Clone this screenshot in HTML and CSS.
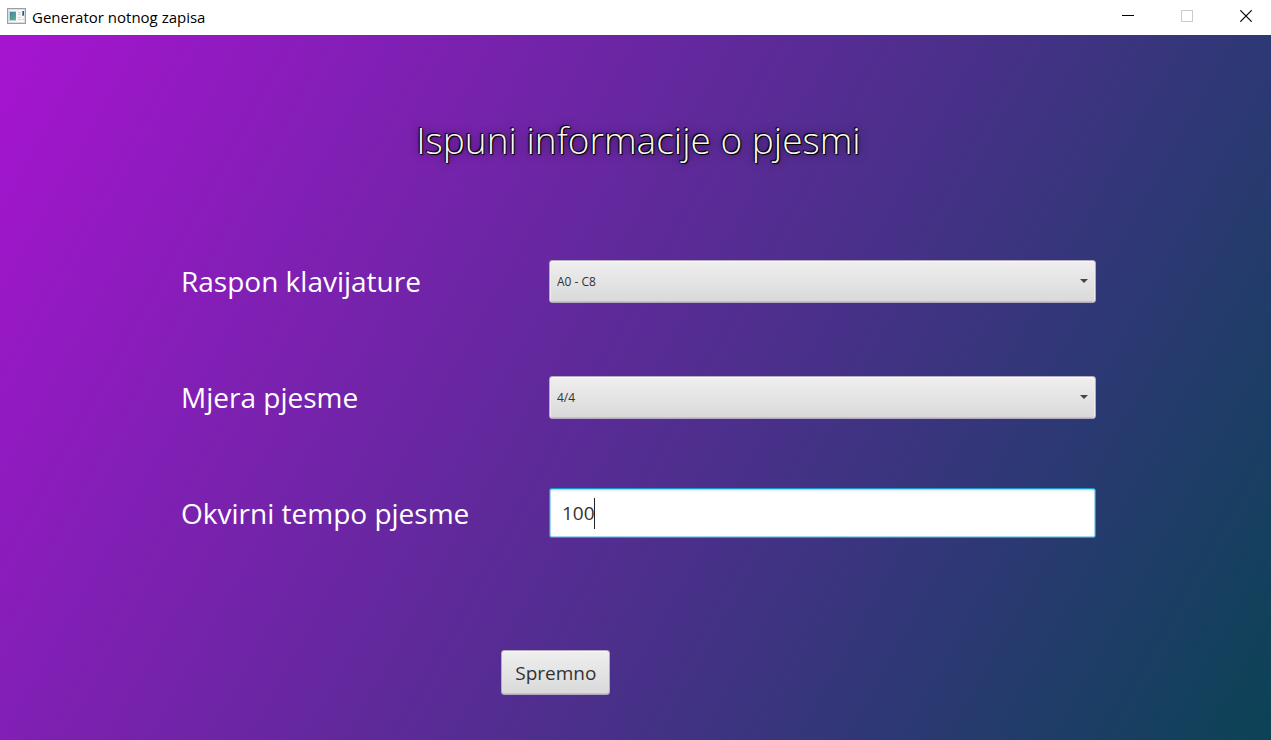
FILE: index.html
```html
<!DOCTYPE html>
<html lang="hr">
<head>
<meta charset="utf-8">
<title>Generator notnog zapisa</title>
<link rel="stylesheet" href="styles.css">
</head>
<body>
<header class="titlebar">
  <svg class="app-icon" width="19" height="17" viewBox="0 0 19 17" aria-hidden="true">
    <defs><linearGradient id="pane" x1="0" y1="0" x2="1" y2="1"><stop offset="0" stop-color="#3f83a8"/><stop offset="1" stop-color="#5fb58a"/></linearGradient></defs>
    <rect x="0.5" y="0.5" width="18" height="15" fill="#f7f7f7" stroke="#9b9fa3"/>
    <rect x="1.5" y="1.5" width="16" height="13" fill="none" stroke="#dcdee0"/>
    <rect x="2" y="3" width="7" height="10" fill="#b9d3dc"/>
    <rect x="3" y="4" width="6" height="8" fill="url(#pane)"/>
    <path d="M11 4.5h3M11 6.5h3M11 9.5h3M11 11.5h3M15 11.5h2" stroke="#d3d5d7"/>
    <rect x="15" y="3" width="2" height="5" fill="#6b9ab4"/>
    <path d="M16.5 3v4" stroke="#2d5574"/>
  </svg>
  <span class="app-name">Generator notnog zapisa</span>
  <div class="window-controls">
    <button class="window-button" type="button" aria-label="Minimiziraj"><svg width="12" height="12" viewBox="0 0 12 12"><path d="M0 5.5h12" stroke="#000"/></svg></button>
    <button class="window-button" type="button" aria-label="Maksimiziraj" disabled><svg width="12" height="12" viewBox="0 0 12 12"><rect x="0.5" y="0.5" width="11" height="11" fill="none" stroke="#ccc"/></svg></button>
    <button class="window-button" type="button" aria-label="Zatvori"><svg width="12" height="12" viewBox="0 0 12 12"><path d="M0.3 0.3l11.4 11.4M11.7 0.3L0.3 11.7" stroke="#000" stroke-width="1.2"/></svg></button>
  </div>
</header>
<main class="scene">
  <h1 class="heading">Ispuni informacije o pjesmi</h1>
  <form class="song-form">
    <label class="label" for="range">Raspon klavijature</label>
    <select class="combo" id="range"><option>A0 - C8</option></select>
    <label class="label" for="meter">Mjera pjesme</label>
    <select class="combo" id="meter"><option>4/4</option></select>
    <label class="label" for="tempo">Okvirni tempo pjesme</label>
    <div class="field">
      <input class="tempo" id="tempo" type="text" value="100">
      <span class="caret"></span>
    </div>
    <button class="submit" type="button">Spremno</button>
  </form>
</main>
</body>
</html>
```
FILE: styles.css
```css
* { box-sizing: border-box; }

body {
  margin: 0;
  min-height: 100vh;
  display: flex;
  flex-direction: column;
  font-family: "Open Sans", "Noto Sans", sans-serif;
}

.titlebar {
  display: flex;
  align-items: center;
  height: 35px;
  padding: 0 0 2px 7px;
  background: #fff;
}

.app-icon { margin-right: 6px; }

.app-name {
  font-size: 15px;
  line-height: 20px;
  color: #000;
}

.window-controls {
  display: flex;
  align-self: flex-start;
  margin-left: auto;
}

.window-button {
  display: flex;
  align-items: center;
  justify-content: center;
  width: 58px;
  height: 32px;
  margin-right: 1px;
  padding: 0;
  border: 0;
  background: none;
}

.window-button:last-child { margin-right: -4px; }

.scene {
  flex: 1;
  padding: 77px 175px 40px 181px;
  background: linear-gradient(119deg, #a714d1 0%, #2e3875 76%, #0b4355 100%);
}

.heading {
  margin: 0;
  font-size: 37px;
  font-weight: 300;
  line-height: 56px;
  text-align: center;
  color: #f8f8f0;
  text-shadow: 0 0 1px #000, 0 0 1px #000, 1px 1px 1px #000, -1px -1px 1px #000, 0 0 8px rgba(0, 0, 0, 0.7);
}

.song-form {
  display: grid;
  grid-template-columns: 368px 1fr;
  align-items: center;
  row-gap: 66px;
  margin-top: 88px;
}

.label {
  font-size: 28px;
  line-height: 50px;
  color: #fff;
}

.combo {
  width: 100%;
  height: 43px;
  padding: 0 7px;
  appearance: none;
  border: 1px solid #b5a9bf;
  border-radius: 3px;
  background:
    url("data:image/svg+xml,%3Csvg xmlns='http://www.w3.org/2000/svg' width='8' height='4'%3E%3Cpath d='M0 0h8L4 4z' fill='%23444'/%3E%3C/svg%3E") right 7px center no-repeat,
    linear-gradient(#efefef, #d9d9d9);
  box-shadow: inset 0 1px #f8f8f8, inset 1px 0 #ececec, inset -1px 0 #ececec, inset 0 -1px #c2c2c2;
  font-family: inherit;
  font-size: 12px;
  color: #323232;
}

.field { position: relative; }

.tempo {
  display: block;
  width: 100%;
  height: 50px;
  padding: 0 12px;
  border: 1px solid #1f94c8;
  border-radius: 3px;
  outline: 0;
  background: #fff;
  box-shadow: inset 0 0 0 1px #a4d8ee, inset 0 2px 2px #dceef5;
  font-family: inherit;
  font-size: 19px;
  color: #323232;
}

.caret {
  position: absolute;
  top: 10px;
  left: 45px;
  width: 1px;
  height: 31px;
  background: #222;
}

.submit {
  grid-column: 1 / -1;
  justify-self: start;
  height: 45px;
  margin-top: 46px;
  margin-left: 35%;
  padding: 0 13px;
  border: 1px solid #b5a9bf;
  border-radius: 3px;
  background: linear-gradient(#efefef, #d9d9d9);
  box-shadow: inset 0 1px #f8f8f8, inset 0 -1px #c2c2c2;
  font-family: inherit;
  font-size: 19px;
  color: #323232;
}
```
